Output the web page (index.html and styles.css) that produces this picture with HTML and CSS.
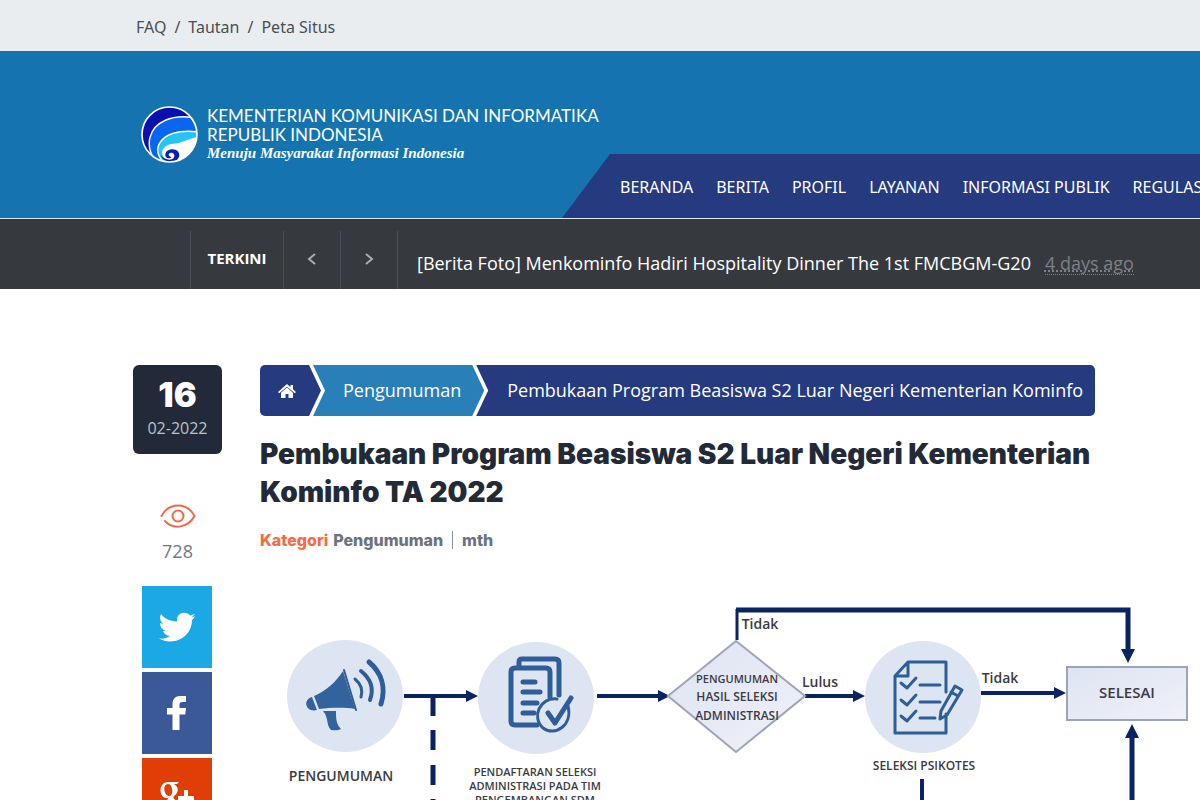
FILE: index.html
```
<!DOCTYPE html>
<html lang="id">
<head>
<meta charset="utf-8">
<title>Pembukaan Program Beasiswa S2 Luar Negeri Kementerian Kominfo</title>
<link rel="stylesheet" href="styles.css">
</head>
<body>
<nav class="topbar">
  <a href="#">FAQ</a><span>/</span><a href="#">Tautan</a><span>/</span><a href="#">Peta Situs</a>
</nav>
<header class="header">
  <a class="brand" href="#">
    <svg class="brand-logo" viewBox="0 0 56 56" aria-hidden="true">
      <clipPath id="disc"><circle cx="28" cy="28" r="27"/></clipPath>
      <g clip-path="url(#disc)">
        <rect width="56" height="56" fill="#0a0fae"/>
        <path d="M14 54C3 38 8 21 24 14c9-4 16-4 25-3l13 21-20 27z" fill="#0a66ee" stroke="#fff" stroke-width="1.400"/>
        <path d="M21 54C11 42 19 31 31 27c9-3 17-3 30-1v33z" fill="#24c4f4" stroke="#fff" stroke-width="1.400"/>
        <path d="M22 50C18 43 24 38 31 37c10 0 15-6 32-8v31H30z" fill="#fff"/>
        <path d="M19 48c2 6 8 8 13 7 6-2 8-9 2-12-5-2-11 1-10 6 1 3 5 3 6 1-3 0-4-3-1-4 4-1 5 4 2 6-4 2-9 0-12-4z" fill="#0a1fb0"/>
      </g>
      <circle cx="28" cy="28" r="27" fill="none" stroke="#fff" stroke-width="1.600"/>
    </svg>
    <span class="brand-text">
      <span class="brand-name">KEMENTERIAN KOMUNIKASI DAN INFORMATIKA</span>
      <span class="brand-name">REPUBLIK INDONESIA</span>
      <span class="brand-motto">Menuju Masyarakat Informasi Indonesia</span>
    </span>
  </a>
  <nav class="menu">
    <a href="#">BERANDA</a><a href="#">BERITA</a><a href="#">PROFIL</a><a href="#">LAYANAN</a><a href="#">INFORMASI PUBLIK</a><a href="#">REGULASI</a>
  </nav>
</header>
<section class="ticker">
  <strong class="ticker-label">TERKINI</strong>
  <button class="ticker-btn" type="button" aria-label="Sebelumnya"><svg width="10" height="12" viewBox="0 0 10 12"><path d="M8 1L2 6l6 5"/></svg></button>
  <button class="ticker-btn" type="button" aria-label="Berikutnya"><svg width="10" height="12" viewBox="0 0 10 12"><path d="M2 1l6 5-6 5"/></svg></button>
  <p class="ticker-news"><a href="#">[Berita Foto] Menkominfo Hadiri Hospitality Dinner The 1st FMCBGM-G20</a><span class="ago">4 days ago</span></p>
</section>
<main class="page">
  <aside class="side">
    <div class="date"><span class="day">16</span><span class="month">02-2022</span></div>
    <svg class="eye" viewBox="0 0 36 24" aria-hidden="true"><path d="M1.500 12C9-2 27-2 34.500 12 28 24 13 26 5 17"/><circle cx="18" cy="12" r="5.500"/></svg>
    <span class="views">728</span>
    <div class="share">
      <a class="share-btn twitter" href="#" aria-label="Twitter"><svg width="38" height="32" viewBox="0 0 38 32"><path d="M37 5c-1 .8-2 1.200-3.500 1.600L37 3l-5 1.500C29 0 19 1 19 9v1.500C12 10 7 8 3 3c-2 4-.5 8 2.500 10L2 12c0 4 2 6.500 6 8H5c1 3 3.500 4.500 7 5-3 2-6.500 3-11 2.500C14 35 33.500 28 34 9c1.500-1.200 2.500-2.500 3-4z"/></svg></a>
      <a class="share-btn facebook" href="#" aria-label="Facebook"><svg width="20" height="34" viewBox="0 0 20 34"><path d="M5.500 34V18.500H0V12h5.500V8.500C5.500 3 8 0 13.500 0H19v6h-3.500c-2.500 0-3 1-3 3v3H19l-.8 6.500h-5.700V34z"/></svg></a>
      <a class="share-btn google" href="#" aria-label="Google Plus"><svg width="36" height="34" viewBox="0 0 36 34"><path fill-rule="evenodd" d="M9 0h11l-2 2h-3c6 4 4 9 0 12-3 3 5 4 5 11 0 11-20 11-20 3 0-5 5-7 10-7-2-2-2-3-1-5C-1 17-1 0 9 0zM9 2c-6 0-4 12 1 12s4-12-1-12zm2 20c-4 0-7 2-7 5 0 6 13 5 13 0 0-2-2-4-4-5zM25 8h4v6h6v4h-6v6h-4v-6h-6v-4h6z"/></svg></a>
    </div>
  </aside>
  <article class="article">
    <nav class="crumbs">
      <a class="crumb home" href="#" aria-label="Beranda"><svg width="18" height="14" viewBox="0 0 18 14"><path d="M9 0L0 8l1.200 1.200L9 2.700l7.800 6.500L18 8l-3-2.700V1h-2.500v2.200zM9 3.600L3 8.700V14h4.500v-4h3v4H15V8.700z"/></svg></a>
      <a class="crumb section" href="#">Pengumuman</a>
      <span class="crumb current">Pembukaan Program Beasiswa S2 Luar Negeri Kementerian Kominfo</span>
    </nav>
    <h1 class="title">Pembukaan Program Beasiswa S2 Luar Negeri Kementerian Kominfo TA 2022</h1>
    <p class="meta"><span class="meta-key">Kategori</span> <a href="#">Pengumuman</a><span class="bar"></span>mth</p>
    <svg class="flow" viewBox="260 590 940 240" role="img" aria-label="Alur seleksi beasiswa">
      <defs><linearGradient id="pane" x2="1" y2="1"><stop stop-color="#dde4f2"/><stop offset="1" stop-color="#f0f0f8"/></linearGradient></defs>
      <g class="disc">
        <ellipse cx="345" cy="696" rx="58" ry="56"/><ellipse cx="536" cy="698" rx="58" ry="56"/><ellipse cx="923" cy="697" rx="58" ry="56"/>
      </g>
      <g class="wire">
        <path d="M404 696h64M597 696h62M805 696h50M981 693h76"/>
        <path d="M737 640v-31" stroke-width="3"/>
        <path d="M736 610h392v42" stroke-width="5"/>
        <path d="M433 697v19M433 730v20M433 765v20M433 799v20M1132 736v90" stroke-width="5"/>
        <path d="M922 779v50"/>
      </g>
      <path class="tip" d="M466 690l12 6-12 6zM658 690l12 6-12 6zM853 690l12 6-12 6zM1054 687l12 6-12 6zM1121 649h14l-7 14zM1125 738h14l-7-14z"/>
      <path class="shape" d="M736 641l69 55-69 56-68-56z"/>
      <rect class="shape" x="1067" y="667" width="120" height="53"/>
      <g class="ink">
        <path d="M343 671l12 38c-12-2-26-1-36 0l-5-13c12-5 22-14 29-25zM312 697l5 13c-11 3-15-10-5-13zM323 711h13c0 7 0 13 5 18-3 2-7 1-10 1-5-5-2-12-8-19z"/>
      </g>
      <g class="line">
        <path d="M344 670l12 40" stroke-width="2"/>
        <path d="M355 679c6 5 8 11 6 18" stroke-width="3"/><path d="M361 671c10 8 13 18 9 29" stroke-width="4"/><path d="M369 662c13 11 17 26 12 42" stroke-width="5"/>
        <path d="M519 665v-3q0-3 3-3h33q4 0 4 4v32M537 725h-22q-4 0-4-4v-49q0-4 4-4h31q4 0 4 4v25M523 682h12M523 692h17M523 703h14M523 713h11" stroke-width="5"/>
        <path d="M568 706c5 19-13 31-25 22-12-11-3-31 14-29" stroke-width="3"/><path d="M548 713l7 10 16-25" stroke-width="5"/>
        <path d="M946 692v-30h-38l-13 14v57h51v-19M908 663v13h-12M920 685h20M920 702h20M920 718h15M901 683l6 5 9-10M901 700l6 5 9-10M901 716l6 5 9-10M955 686l7 4-15 25-7 4 1-8zM951 692l7 4" stroke-width="3"/>
      </g>
      <g class="label">
        <text x="341" y="781" font-size="14">PENGUMUMAN</text>
        <text x="535" y="776" font-size="11">PENDAFTARAN SELEKSI</text>
        <text x="535" y="790" font-size="11">ADMINISTRASI PADA TIM</text>
        <text x="535" y="804" font-size="11">PENGEMBANGAN SDM</text>
        <text x="737" y="683" font-size="11">PENGUMUMAN</text>
        <text x="737" y="701" font-size="12">HASIL SELEKSI</text>
        <text x="737" y="720" font-size="12">ADMINISTRASI</text>
        <text x="760" y="629" font-size="14">Tidak</text>
        <text x="820" y="687" font-size="14">Lulus</text>
        <text x="1000" y="683" font-size="14">Tidak</text>
        <text x="924" y="770" font-size="12">SELEKSI PSIKOTES</text>
        <text x="1127" y="698" font-size="15">SELESAI</text>
      </g>
    </svg>
  </article>
</main>
</body>
</html>
```
FILE: styles.css
```
* { box-sizing: border-box; }
body { margin: 0; height: 100vh; overflow: hidden; background: #fff; font-family: "Open Sans", sans-serif; color: #222a38; }
a { color: inherit; text-decoration: none; }
p, h1 { margin: 0; }
.topbar { display: flex; align-items: center; gap: 8px; height: 51px; padding: 2px 136px 0; background: #e9edf0; font-family: "Noto Sans", sans-serif; font-size: 16px; color: #4a4e53; }
.header { display: flex; height: 167px; overflow: hidden; background: #1574af; }
.brand { display: flex; gap: 9px; flex: none; align-items: flex-start; padding: 55px 0 0 141px; width: 562px; color: #fff; }
.brand-logo { flex: none; width: 57px; height: 57px; }
.brand-text { display: flex; flex-direction: column; font-family: Lato, sans-serif; white-space: nowrap; }
.brand-name { font-size: 17px; line-height: 19px; }
.brand-motto { font-family: "Liberation Serif", serif; font-style: italic; font-weight: 700; font-size: 15px; line-height: 18px; }
.menu { display: flex; align-items: center; align-self: flex-end; gap: 23px; flex: 1 0 auto; height: 64px; padding: 2px 0 0 58px; background: #263a80; clip-path: polygon(48px 0, 100% 0, 100% 100%, 0 100%); font-family: "Noto Sans", sans-serif; font-size: 16px; color: #fff; white-space: nowrap; }
.ticker { display: flex; height: 71px; padding: 12px 0 0 190px; border-top: 1px solid #dce7ee; background: #363a3f; color: #fff; }
.ticker-label, .ticker-btn { display: flex; align-items: center; justify-content: center; padding: 0 0 4px; border: 0; border-left: 1px solid #4b4f55; background: none; }
.ticker-label { width: 93px; font-size: 15px; }
.ticker-btn { width: 57px; padding-bottom: 2px; }
.ticker-btn svg { fill: none; stroke: #a9adb2; stroke-width: 2; }
.ticker-news { display: flex; gap: 14px; align-items: center; padding: 6px 0 0 19px; border-left: 1px solid #4b4f55; font-size: 18px; white-space: nowrap; }
.ago { color: #7d8186; line-height: 22px; border-bottom: 1px dotted #7d8186; text-decoration: underline dotted; }
.page { display: flex; align-items: flex-start; gap: 38px; padding: 76px 0 0 133px; }
.side { display: flex; flex: none; flex-direction: column; align-items: center; width: 89px; }
.date { display: flex; flex-direction: column; align-items: center; width: 100%; height: 89px; padding-top: 12px; border-radius: 6px; background: #222a3a; }
.day { font: 900 34px/36px Inter, sans-serif; color: #fff; }
.month { font-size: 16px; line-height: 30px; color: #bcc1c9; }
.eye { width: 36px; height: 24px; margin-top: 50px; fill: none; stroke: #f0694a; stroke-width: 2; stroke-linecap: round; }
.views { margin-top: 11px; font-size: 18px; line-height: 24px; color: #74787f; }
.share { display: flex; flex-direction: column; align-self: stretch; gap: 4px; margin-top: 23px; padding-left: 9px; }
.share-btn { display: flex; align-items: center; justify-content: center; width: 70px; height: 82px; }
.share-btn svg { fill: #fff; }
.twitter { background: #1ba9e5; }
.facebook { background: #3b5998; }
.google { background: #df3f07; }
.article { flex: 1; min-width: 0; }
.crumbs { display: flex; height: 51px; font-size: 18px; color: #fff; white-space: nowrap; }
.crumb { display: flex; align-items: center; }
.home { width: 61px; padding-left: 18px; border-radius: 5px 0 0 5px; background: #263a80; clip-path: polygon(0 0, calc(100% - 12px) 0, 100% 50%, calc(100% - 12px) 100%, 0 100%); }
.home svg { flex: none; fill: #fff; }
.section { margin-left: -8px; padding: 0 23px 2px 30px; background: #2980b9; clip-path: polygon(0 0, calc(100% - 12px) 0, 100% 50%, calc(100% - 12px) 100%, 0 100%, 12px 50%); }
.current { margin-left: -8px; padding: 0 12px 2px 31px; border-radius: 0 5px 5px 0; background: #263a80; clip-path: polygon(0 0, 100% 0, 100% 100%, 0 100%, 12px 50%); }
.title { max-width: 880px; margin-top: 19px; font: 900 28px/38px Inter, sans-serif; }
.meta { display: flex; align-items: center; margin-top: 17px; gap: 5px; font: 800 16px/24px Inter, sans-serif; color: #6b7280; }
.meta-key { color: #f56b42; }
.bar { width: 1px; height: 18px; margin: 0 4px; background: #888e98; }
.flow { display: block; width: 100%; margin-top: 38px; }
.disc { fill: #dde5f2; }
.wire { fill: none; stroke: #0a2463; stroke-width: 4; }
.tip { fill: #0a2463; }
.shape { fill: url(#pane); stroke: #9ba5b8; stroke-width: 2; }
.ink { fill: #32639d; }
.line { fill: none; stroke: #2f5d98; stroke-linecap: round; stroke-linejoin: round; }
.label { font-family: "Open Sans", sans-serif; font-weight: 600; fill: #3b3b42; text-anchor: middle; }
```
